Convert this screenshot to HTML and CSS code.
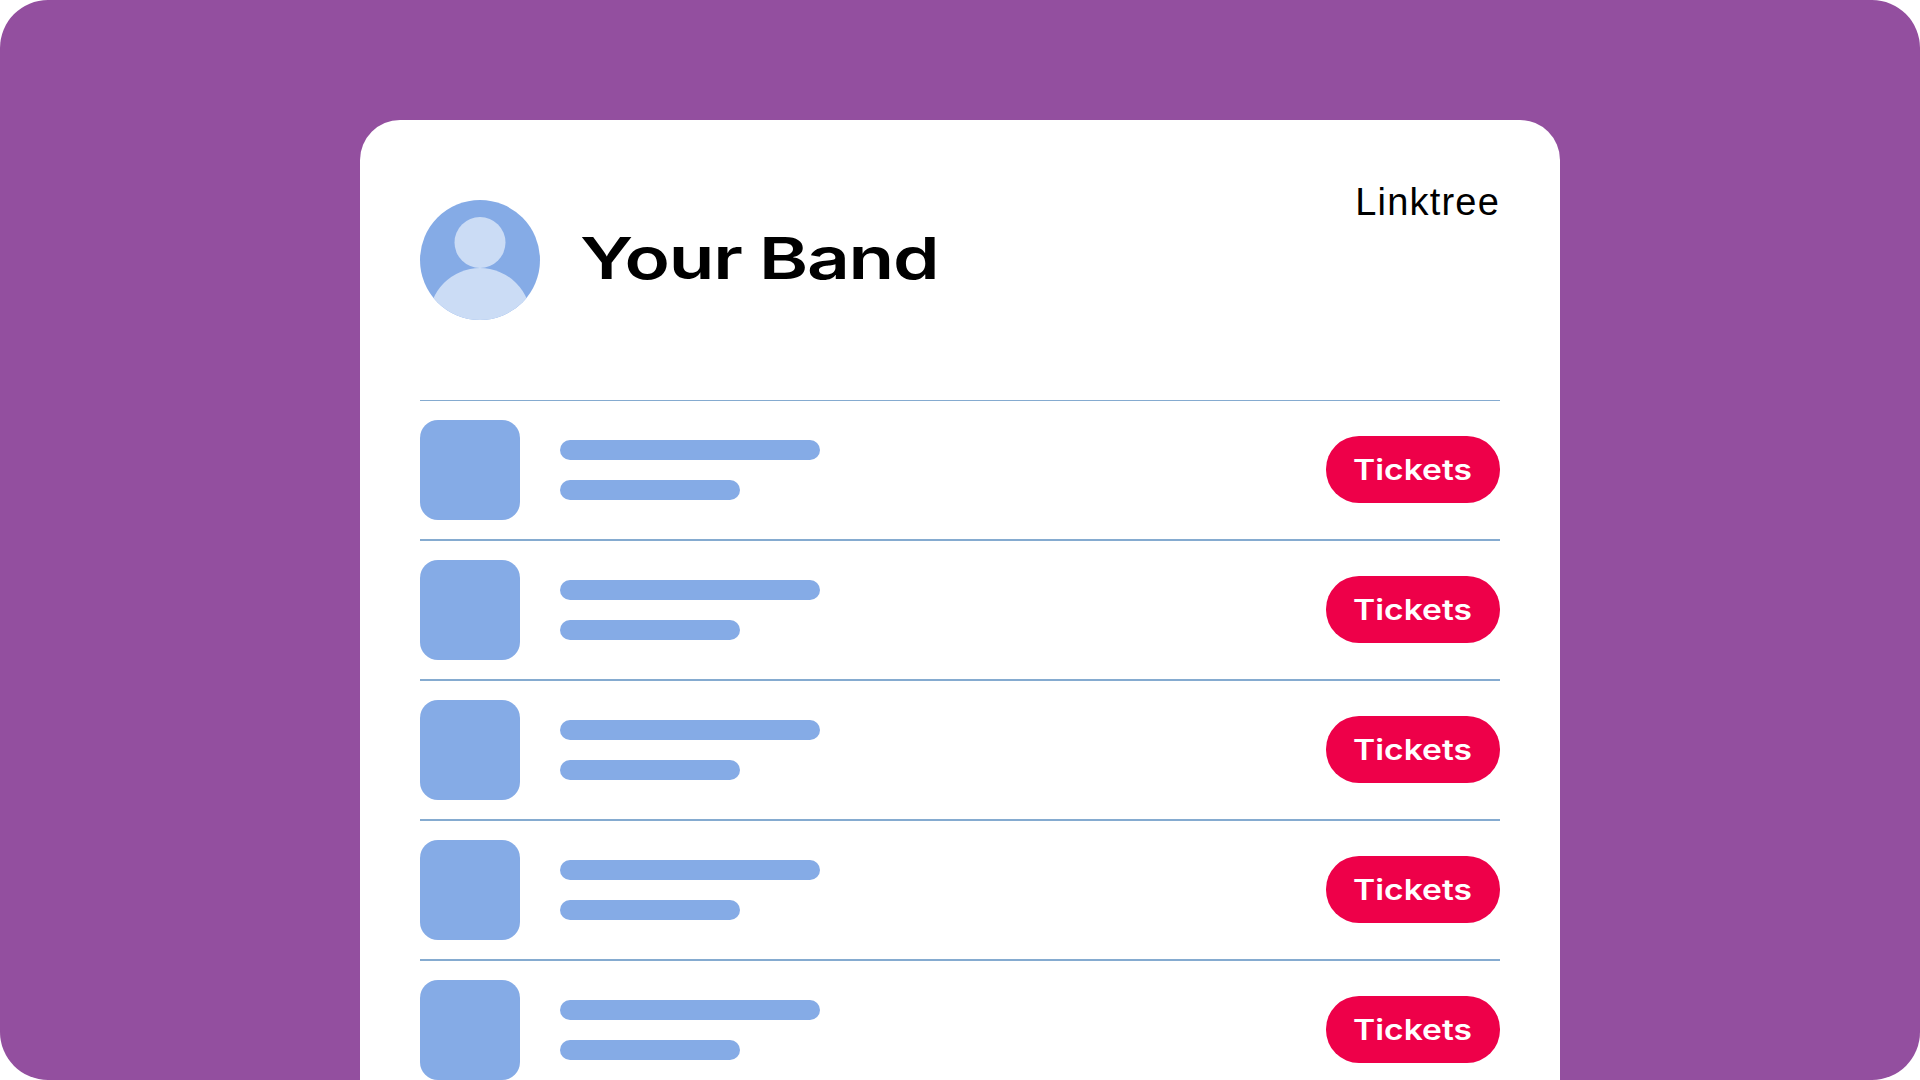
FILE: index.html
```html
<!DOCTYPE html>
<html lang="en">
<head>
<meta charset="utf-8">
<title>Your Band</title>
<link rel="stylesheet" href="styles.css">
</head>
<body>
<main class="stage">
  <section class="card">
    <header class="head">
      <svg class="avatar" viewBox="0 0 120 120" aria-hidden="true">
        <defs><clipPath id="avatar-clip"><circle cx="60" cy="60" r="60"/></clipPath></defs>
        <circle cx="60" cy="60" r="60" fill="#85abe6"/>
        <g clip-path="url(#avatar-clip)" fill="#cbdcf5">
          <circle cx="60" cy="42.500" r="25.500"/>
          <circle cx="60" cy="119" r="51"/>
        </g>
      </svg>
      <h1 class="band">Your Band</h1>
      <p class="brand">Linktree</p>
    </header>
    <div class="list">
      <article class="row"><div class="thumb"></div><div class="bars"><span class="bar bar-long"></span><span class="bar bar-short"></span></div><a class="tickets"><span>Tickets</span></a></article>
      <article class="row"><div class="thumb"></div><div class="bars"><span class="bar bar-long"></span><span class="bar bar-short"></span></div><a class="tickets"><span>Tickets</span></a></article>
      <article class="row"><div class="thumb"></div><div class="bars"><span class="bar bar-long"></span><span class="bar bar-short"></span></div><a class="tickets"><span>Tickets</span></a></article>
      <article class="row"><div class="thumb"></div><div class="bars"><span class="bar bar-long"></span><span class="bar bar-short"></span></div><a class="tickets"><span>Tickets</span></a></article>
      <article class="row"><div class="thumb"></div><div class="bars"><span class="bar bar-long"></span><span class="bar bar-short"></span></div><a class="tickets"><span>Tickets</span></a></article>
    </div>
  </section>
</main>
</body>
</html>
```
FILE: styles.css
```css
* { box-sizing: border-box; }
html, body { margin: 0; height: 100%; background: #fff; }
body { overflow: hidden; font-family: "Inter", "Liberation Sans", sans-serif; }
.stage {
  width: 1920px; height: 1080px; background: #934f9f; border-radius: 48px;
  overflow: hidden; padding-top: 120px; display: flex; justify-content: center;
}
.card {
  width: 1200px; height: 960px; background: #fff; border-radius: 40px 40px 0 0;
  padding: 80px 60px 0; display: flex; flex-direction: column;
}
.head { display: flex; align-items: flex-start; height: 200px; flex: none; }
.avatar { width: 120px; height: 120px; flex: none; display: block; }
.band {
  margin: 23px 0 0 40px; font-size: 58px; line-height: 70px; font-weight: 600;
  color: #000; letter-spacing: -1px; transform: scaleX(1.287); transform-origin: left center;
}
.brand {
  margin: -23px 0 0 auto; font-family: "Liberation Sans", sans-serif; font-size: 38px;
  line-height: 50px; color: #000; letter-spacing: 1.2px;
}
.list { display: flex; flex-direction: column; flex: none; }
.row {
  height: 140px; flex: none; border-top: 2px solid #85abd0; padding: 19px 0;
  display: flex; align-items: center;
}
.row:first-child { height: 139px; border-top-width: 1px; }
.thumb { width: 100px; height: 100px; flex: none; background: #85abe6; border-radius: 18px; }
.bars { margin-left: 40px; display: flex; flex-direction: column; gap: 20px; flex: 1; }
.bar { display: block; height: 20px; background: #85abe6; border-radius: 10px; }
.bar-long { width: 260px; }
.bar-short { width: 180px; }
.tickets {
  width: 174px; height: 67px; margin-bottom: 1px; flex: none; background: #ee0049; border-radius: 33px;
  display: flex; align-items: center; justify-content: center; color: #fff;
  font-size: 28px; font-weight: 600;
}
.tickets span { display: block; transform: scaleX(1.2); }
```
